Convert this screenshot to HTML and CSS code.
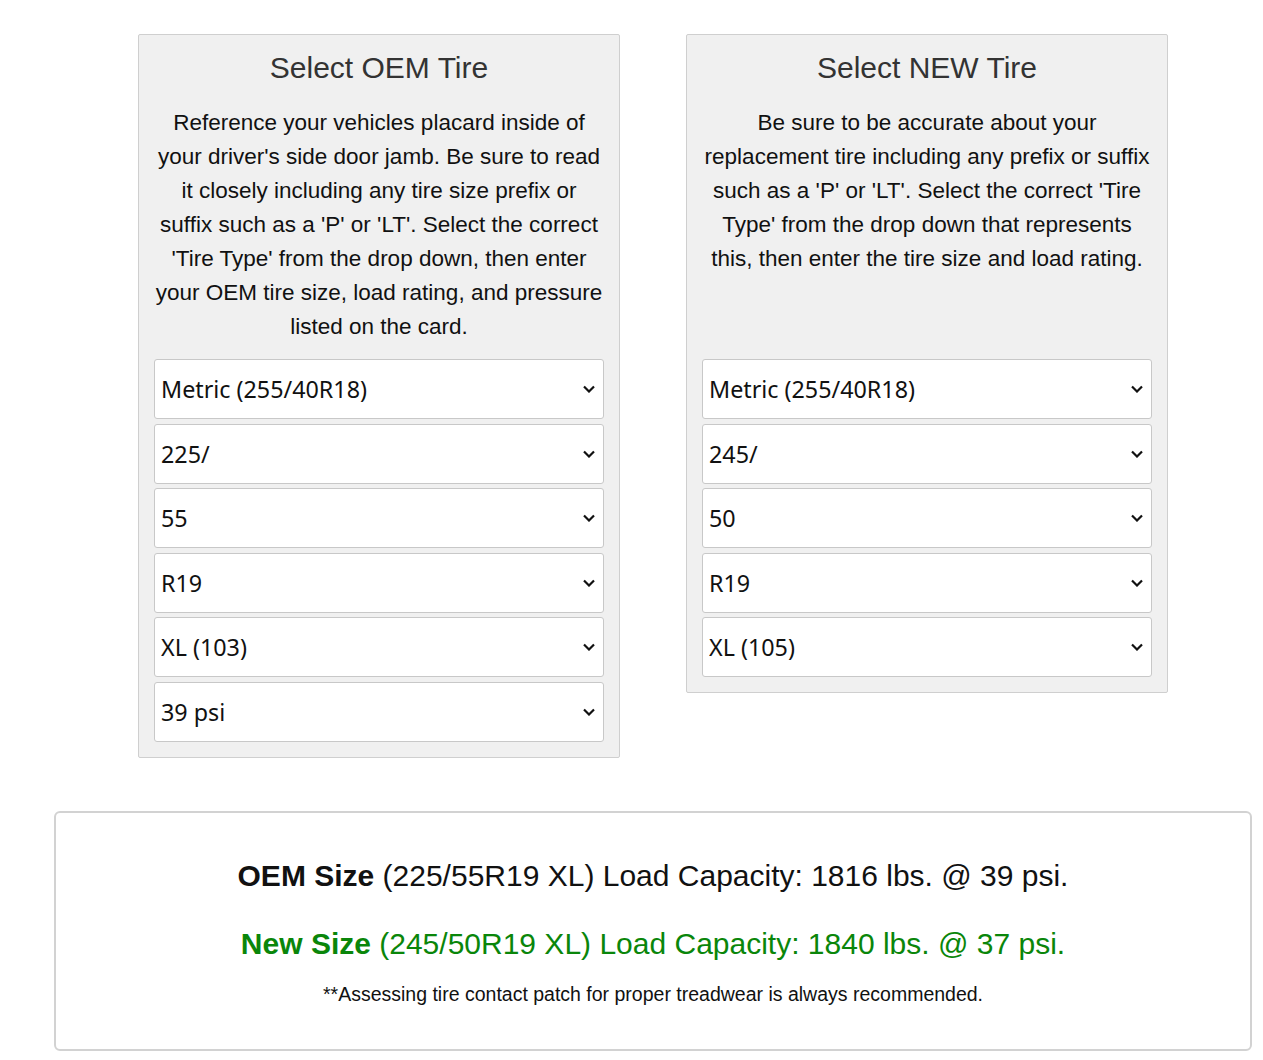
FILE: index.html
```html
<!DOCTYPE html>
<html lang="en">
<head>
    <meta charset="UTF-8">
    <meta name="viewport" content="width=device-width, initial-scale=1.0">
    <title>Tire Load Calculator</title>
    <link rel="stylesheet" href="styles.css">
</head>
<body>
    <div class="calculator">
        <div class="panels">
            <div class="panel">
                <h2>Select OEM Tire</h2>
                <p class="desc">Reference your vehicles placard inside of your driver's side door jamb. Be sure to read it closely including any tire size prefix or suffix such as a 'P' or 'LT'. Select the correct 'Tire Type' from the drop down, then enter your OEM tire size, load rating, and pressure listed on the card.</p>
                <div class="fields">
                    <div class="select-wrap">
                        <select><option>Metric (255/40R18)</option></select>
                        <svg class="chevron" viewBox="0 0 12 8"><path d="M1 1.5 6 6.5 11 1.5"/></svg>
                    </div>
                    <div class="select-wrap">
                        <select><option>225/</option></select>
                        <svg class="chevron" viewBox="0 0 12 8"><path d="M1 1.5 6 6.5 11 1.5"/></svg>
                    </div>
                    <div class="select-wrap">
                        <select><option>55</option></select>
                        <svg class="chevron" viewBox="0 0 12 8"><path d="M1 1.5 6 6.5 11 1.5"/></svg>
                    </div>
                    <div class="select-wrap">
                        <select><option>R19</option></select>
                        <svg class="chevron" viewBox="0 0 12 8"><path d="M1 1.5 6 6.5 11 1.5"/></svg>
                    </div>
                    <div class="select-wrap">
                        <select><option>XL (103)</option></select>
                        <svg class="chevron" viewBox="0 0 12 8"><path d="M1 1.5 6 6.5 11 1.5"/></svg>
                    </div>
                    <div class="select-wrap">
                        <select><option>39 psi</option></select>
                        <svg class="chevron" viewBox="0 0 12 8"><path d="M1 1.5 6 6.5 11 1.5"/></svg>
                    </div>
                </div>
            </div>

            <div class="panel">
                <h2>Select NEW Tire</h2>
                <p class="desc">Be sure to be accurate about your replacement tire including any prefix or suffix such as a 'P' or 'LT'. Select the correct 'Tire Type' from the drop down that represents this, then enter the tire size and load rating.</p>
                <div class="fields">
                    <div class="select-wrap">
                        <select><option>Metric (255/40R18)</option></select>
                        <svg class="chevron" viewBox="0 0 12 8"><path d="M1 1.5 6 6.5 11 1.5"/></svg>
                    </div>
                    <div class="select-wrap">
                        <select><option>245/</option></select>
                        <svg class="chevron" viewBox="0 0 12 8"><path d="M1 1.5 6 6.5 11 1.5"/></svg>
                    </div>
                    <div class="select-wrap">
                        <select><option>50</option></select>
                        <svg class="chevron" viewBox="0 0 12 8"><path d="M1 1.5 6 6.5 11 1.5"/></svg>
                    </div>
                    <div class="select-wrap">
                        <select><option>R19</option></select>
                        <svg class="chevron" viewBox="0 0 12 8"><path d="M1 1.5 6 6.5 11 1.5"/></svg>
                    </div>
                    <div class="select-wrap">
                        <select><option>XL (105)</option></select>
                        <svg class="chevron" viewBox="0 0 12 8"><path d="M1 1.5 6 6.5 11 1.5"/></svg>
                    </div>
                </div>
            </div>
        </div>

        <div class="result">
            <p class="oem"><strong>OEM Size</strong> (225/55R19 XL) Load Capacity: 1816 lbs. @ 39 psi.</p>
            <p class="new"><strong>New Size</strong> (245/50R19 XL) Load Capacity: 1840 lbs. @ 37 psi.</p>
            <p class="note">**Assessing tire contact patch for proper treadwear is always recommended.</p>
        </div>
    </div>
</body>
</html>
```

FILE: styles.css
```css
body {
    font-family: "Liberation Sans", Arial, sans-serif;
    margin: 0;
    padding: 0;
    background-color: #fff;
    color: #111;
}

.calculator {
    width: 1198px;
    margin-left: 54px;
    padding-top: 34px;
}

.panels {
    display: flex;
    justify-content: center;
    align-items: flex-start;
    gap: 66px;
}

.panel {
    width: 450px;
    padding: 0 15px 15px;
    background: #f0f0f0;
    border: 1px solid #cfcfcf;
    border-radius: 2px;
}

.panel h2 {
    margin: 16px 0 0;
    font-size: 30px;
    font-weight: normal;
    line-height: 34px;
    color: #333;
    text-align: center;
}

.desc {
    height: 238px;
    margin: 21px 0 15px;
    font-size: 22.5px;
    line-height: 34px;
    text-align: center;
}

.fields {
    display: flex;
    flex-direction: column;
    gap: 4.5px;
}

.select-wrap {
    position: relative;
}

.select-wrap select {
    display: block;
    width: 100%;
    height: 60px;
    padding: 0 30px 0 6px;
    font-family: "Noto Sans", "Open Sans", sans-serif;
    font-size: 23.3px;
    color: #111;
    background: #fff;
    border: 1px solid #c8c8c8;
    border-radius: 3px;
    box-sizing: border-box;
    appearance: none;
    -webkit-appearance: none;
}

.chevron {
    position: absolute;
    right: 9px;
    top: 26px;
    width: 12px;
    height: 8px;
    fill: none;
    stroke: #111;
    stroke-width: 2.2;
    pointer-events: none;
}

.result {
    margin-top: 53px;
    height: 240px;
    padding-top: 46px;
    box-sizing: border-box;
    border: 2px solid #d2d2d2;
    border-radius: 6px;
    text-align: center;
}

.result p {
    margin: 0;
}

.oem {
    font-size: 30px;
    line-height: 34px;
    color: #111;
}

.new {
    margin-top: 34px !important;
    font-size: 30px;
    line-height: 34px;
    color: #0a860a;
}

.note {
    margin-top: 22px !important;
    font-size: 19.5px;
    line-height: 22px;
    color: #111;
}
```
